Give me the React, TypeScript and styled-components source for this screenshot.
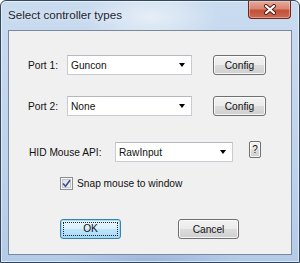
import React from 'react'
import styled, { createGlobalStyle } from 'styled-components'

const GlobalStyle = createGlobalStyle`
    html, body {
        margin: 0;
        padding: 0;
        background: #ffffff;
    }
    body {
        font-family: 'Liberation Sans', Arial, sans-serif;
    }
`

const ControllerDialog = function (): JSX.Element {
    const ports = [
        { label: 'Port 1:', value: 'Guncon' },
        { label: 'Port 2:', value: 'None' }
    ]

    return (
        <StyledWindow>
            <GlobalStyle />
            <TitleBar>
                <Title>Select controller types</Title>
                <CloseButton type="button" aria-label="Close">
                    <svg width="14" height="11" viewBox="0 0 14 11">
                        <path d="M3 2 L11 9 M11 2 L3 9" stroke="#4a1a14" strokeWidth="4" strokeLinecap="round" />
                        <path d="M3 2 L11 9 M11 2 L3 9" stroke="#ffffff" strokeWidth="2.2" strokeLinecap="round" />
                    </svg>
                </CloseButton>
            </TitleBar>
            <Client>
                {ports.map((port, i) => (
                    <Row key={port.label} $mt={i === 0 ? 24 : 21}>
                        <Label $w={39}>{port.label}</Label>
                        <Combo $w={125}>
                            <span>{port.value}</span>
                            <Arrow />
                        </Combo>
                        <PushButton type="button" $w={53} $ml={21}>
                            Config
                        </PushButton>
                    </Row>
                ))}
                <Row $mt={26} $align="flex-start">
                    <Label $w={87} $indent={20}>
                        HID Mouse API:
                    </Label>
                    <Combo $w={118}>
                        <span>RawInput</span>
                        <Arrow />
                    </Combo>
                    <HelpButton type="button">?</HelpButton>
                </Row>
                <CheckRow $mt={15}>
                    <CheckBox>
                        <svg width="9" height="9" viewBox="0 0 9 9">
                            <path d="M1 4.5 L3.5 7.2 L8 1.2" fill="none" stroke="#3b5190" strokeWidth="1.6" />
                        </svg>
                    </CheckBox>
                    <span>Snap mouse to window</span>
                </CheckRow>
                <ButtonRow>
                    <PushButton type="button" $w={61} $primary>
                        <FocusRect>OK</FocusRect>
                    </PushButton>
                    <PushButton type="button" $w={61} $ml={57}>
                        Cancel
                    </PushButton>
                </ButtonRow>
            </Client>
        </StyledWindow>
    )
}

export default ControllerDialog

const StyledWindow = styled.div`
    width: 300px;
    height: 263px;
    box-sizing: border-box;
    border: 1px solid #33475c;
    border-radius: 6px 6px 0 0;
    padding: 0 7px 7px 7px;
    display: flex;
    flex-direction: column;
    background: radial-gradient(ellipse 70px 30px at 150px 16px, rgba(255, 255, 255, 0.55), rgba(255, 255, 255, 0)),
        radial-gradient(ellipse 90px 12px at 150px 258px, rgba(120, 150, 190, 0.35), rgba(120, 150, 190, 0)),
        linear-gradient(180deg, #c9dbef 0%, #bed3ec 60%, #b4cbe8 100%);
    box-shadow: inset 0 0 0 1px rgba(255, 255, 255, 0.55);
`

const TitleBar = styled.div`
    height: 29px;
    display: flex;
    align-items: flex-start;
    justify-content: space-between;
    padding-right: 1px;
`

const Title = styled.span`
    margin-top: 7px;
    font-size: 11.6px;
    line-height: 14px;
    color: #1b2430;
    text-shadow: 0 0 6px rgba(255, 255, 255, 0.9);
`

const CloseButton = styled.button`
    width: 43px;
    height: 18px;
    margin-top: 0;
    padding: 0;
    border: 1px solid #6e261b;
    border-top: none;
    border-radius: 0 0 4px 4px;
    display: flex;
    align-items: center;
    justify-content: center;
    background: linear-gradient(180deg, #e8a89a 0%, #d98672 45%, #c2503a 55%, #cc6a4f 100%);
    box-shadow: inset 0 0 0 1px rgba(255, 220, 210, 0.45);
`

const Client = styled.div`
    flex: 1;
    border: 1px solid #7a8a9c;
    background: #f0f0f0;
    display: flex;
    flex-direction: column;
    font-size: 10.2px;
    color: #111;
`

const Row = styled.div<{ $mt: number; $align?: string }>`
    display: flex;
    align-items: ${p => p.$align || 'center'};
    margin-top: ${p => p.$mt}px;
    padding-left: 19px;
`

const Label = styled.span<{ $w: number; $indent?: number }>`
    width: ${p => p.$w}px;
    box-sizing: border-box;
    padding-left: ${p => (p.$indent ? 1 : 0)}px;
    align-self: center;
`

const Combo = styled.div<{ $w: number }>`
    position: relative;
    width: ${p => p.$w}px;
    height: 20px;
    box-sizing: border-box;
    border: 1px solid #c8cbd1;
    border-top-color: #b5b8bf;
    background: #ffffff;
    display: flex;
    align-items: center;
    padding-left: 3px;
`

const Arrow = styled.span`
    position: absolute;
    right: 6px;
    top: 7px;
    width: 0;
    height: 0;
    border-left: 3.5px solid transparent;
    border-right: 3.5px solid transparent;
    border-top: 4px solid #000;
`

const PushButton = styled.button<{ $w: number; $ml?: number; $primary?: boolean }>`
    width: ${p => p.$w}px;
    height: 20px;
    margin-left: ${p => p.$ml || 0}px;
    padding: 0;
    box-sizing: border-box;
    border: 1px solid ${p => (p.$primary ? '#3c7fb1' : '#707070')};
    border-radius: 3px;
    font-family: inherit;
    font-size: 10.2px;
    color: #111;
    display: flex;
    align-items: center;
    justify-content: center;
    background: ${p =>
        p.$primary
            ? 'linear-gradient(180deg, #eaf6fd 0%, #d9f0fc 50%, #bee6fd 50%, #a7d9f5 100%)'
            : 'linear-gradient(180deg, #f2f2f2 0%, #ebebeb 50%, #dddddd 50%, #cfcfcf 100%)'};
    box-shadow: inset 0 0 0 1px ${p => (p.$primary ? 'rgba(150, 220, 250, 0.9)' : 'rgba(255, 255, 255, 0.8)')};
`

const FocusRect = styled.span`
    width: 55px;
    height: 14px;
    box-sizing: border-box;
    border: 1px dotted #222;
    display: flex;
    align-items: center;
    justify-content: center;
    line-height: 10px;
`

const HelpButton = styled.button`
    width: 12px;
    height: 17px;
    margin-left: 16px;
    margin-top: -1px;
    padding: 0;
    box-sizing: border-box;
    border: 1px solid #707070;
    border-radius: 2px;
    font-family: inherit;
    font-size: 10px;
    color: #111;
    background: linear-gradient(180deg, #f2f2f2 0%, #ebebeb 50%, #dddddd 50%, #cfcfcf 100%);
    box-shadow: inset 0 0 0 1px rgba(255, 255, 255, 0.8);
`

const CheckRow = styled.label<{ $mt: number }>`
    display: flex;
    align-items: center;
    gap: 4px;
    margin-top: ${p => p.$mt}px;
    padding-left: 51px;
    height: 13px;
`

const CheckBox = styled.span`
    width: 13px;
    height: 13px;
    box-sizing: border-box;
    border: 1px solid #8e8f8f;
    background: linear-gradient(135deg, #dcdcdc 0%, #f6f6f6 100%);
    box-shadow: inset 0 0 0 1px #f4f4f4, inset 0 0 0 2px #c8c8c8;
    display: flex;
    align-items: center;
    justify-content: center;
`

const ButtonRow = styled.div`
    display: flex;
    margin-top: 29px;
    padding-left: 51px;
`
